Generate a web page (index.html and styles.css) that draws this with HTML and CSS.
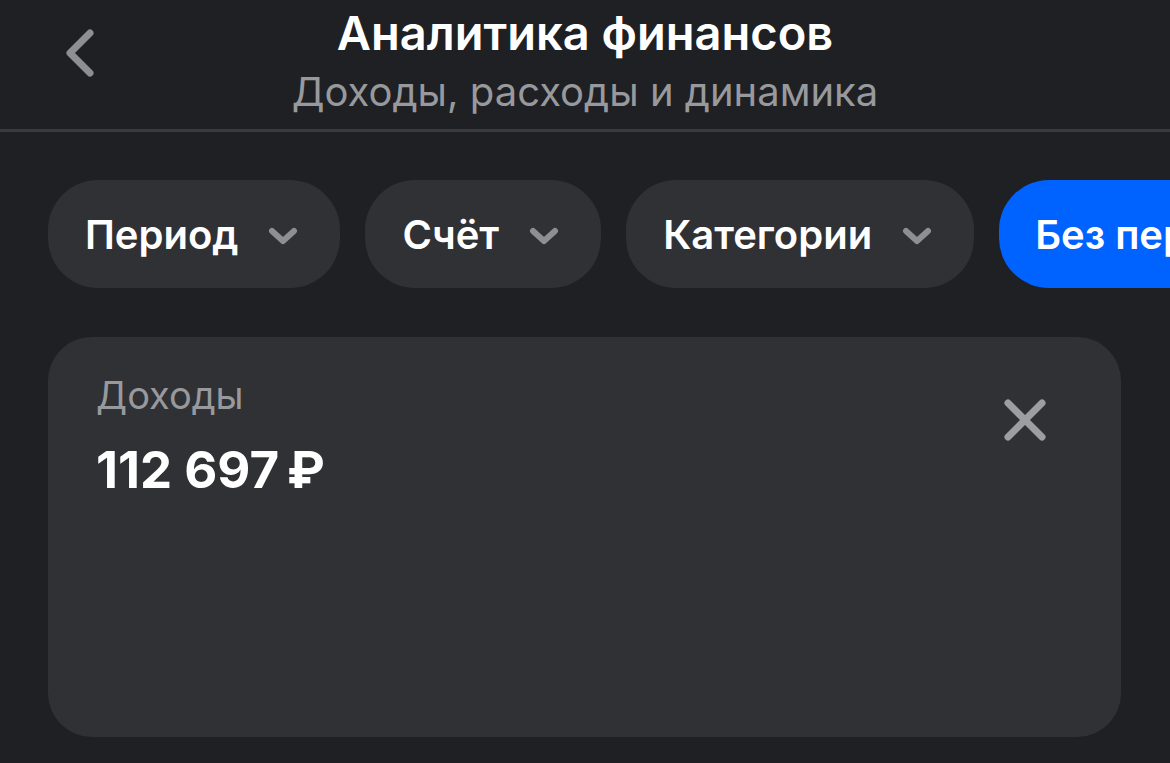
FILE: index.html
```html
<!DOCTYPE html>
<html lang="ru">
<head>
    <meta charset="UTF-8">
    <meta name="viewport" content="width=device-width, initial-scale=1.0">
    <title>Аналитика финансов</title>
    <link rel="stylesheet" href="styles.css">
</head>
<body>
    <header class="top-bar">
        <button class="back-btn" type="button" aria-label="Назад">
            <svg width="36" height="50" viewBox="0 0 36 50">
                <path d="M28 5 L8 25 L28 45" fill="none" stroke="#8e8f93" stroke-width="7" stroke-linecap="round" stroke-linejoin="round"/>
            </svg>
        </button>
        <div class="titles">
            <h1 class="title">Аналитика финансов</h1>
            <p class="subtitle">Доходы, расходы и динамика</p>
        </div>
    </header>

    <nav class="filters">
        <button class="chip" type="button">Период
            <svg class="chev" width="30" height="18" viewBox="0 0 30 18"><path d="M4 4 L15 14 L26 4" fill="none" stroke="#8e8f93" stroke-width="6" stroke-linecap="round" stroke-linejoin="round"/></svg>
        </button>
        <button class="chip" type="button">Счёт
            <svg class="chev" width="30" height="18" viewBox="0 0 30 18"><path d="M4 4 L15 14 L26 4" fill="none" stroke="#8e8f93" stroke-width="6" stroke-linecap="round" stroke-linejoin="round"/></svg>
        </button>
        <button class="chip" type="button">Категории
            <svg class="chev" width="30" height="18" viewBox="0 0 30 18"><path d="M4 4 L15 14 L26 4" fill="none" stroke="#8e8f93" stroke-width="6" stroke-linecap="round" stroke-linejoin="round"/></svg>
        </button>
        <button class="chip chip-active" type="button">Без перевода</button>
    </nav>

    <section class="card">
        <div class="card-head">
            <div>
                <div class="card-label">Доходы</div>
                <div class="card-amount">112 697&#8239;₽</div>
            </div>
            <button class="close-btn" type="button" aria-label="Закрыть">
                <svg width="44" height="44" viewBox="0 0 44 44">
                    <path d="M5 5 L39 39 M39 5 L5 39" fill="none" stroke="#9d9ea2" stroke-width="7" stroke-linecap="round"/>
                </svg>
            </button>
        </div>
    </section>
</body>
</html>
```

FILE: styles.css
```css
/* Global */
body {
    margin: 0;
    width: 1170px;
    height: 763px;
    overflow: hidden;
    background: #1e2024;
    font-family: Inter, "Noto Sans", sans-serif;
    color: #ffffff;
}

button {
    font-family: inherit;
    border: none;
    background: none;
    color: inherit;
    padding: 0;
    cursor: pointer;
}

/* Header */
.top-bar {
    position: relative;
    height: 129px;
    border-bottom: 3px solid #393a3e;
    display: flex;
    justify-content: center;
}

.back-btn {
    position: absolute;
    left: 62px;
    top: 28px;
    display: flex;
}

.titles {
    text-align: center;
    padding-top: 7px;
}

.title {
    margin: 0;
    font-size: 47px;
    font-weight: 600;
    line-height: 52px;
}

.subtitle {
    margin: 10px 0 0;
    font-size: 40px;
    line-height: 46px;
    color: #98999d;
}

/* Filter chips */
.filters {
    display: flex;
    gap: 25px;
    padding: 48px 0 0 48px;
    white-space: nowrap;
    overflow: hidden;
}

.chip {
    flex-shrink: 0;
    height: 108px;
    padding: 0 42px 0 37px;
    border-radius: 50px;
    background: #303135;
    font-size: 40px;
    font-weight: 600;
    display: flex;
    align-items: center;
    gap: 30px;
}

.chip-active {
    background: #0062ff;
    padding: 0 36px;
}

.chev {
    margin-top: 4px;
}

/* Card */
.card {
    margin: 49px 0 0 48px;
    width: 1073px;
    height: 400px;
    box-sizing: border-box;
    padding: 34px 74px 0 48px;
    border-radius: 44px;
    background: #303135;
}

.card-head {
    display: flex;
    justify-content: space-between;
    align-items: flex-start;
}

.card-label {
    font-size: 38px;
    line-height: 48px;
    color: #98999d;
}

.card-amount {
    margin-top: 21px;
    font-size: 51px;
    font-weight: 700;
    line-height: 60px;
    letter-spacing: -2.5px;
}

.close-btn {
    margin-top: 27px;
    display: flex;
}
```
